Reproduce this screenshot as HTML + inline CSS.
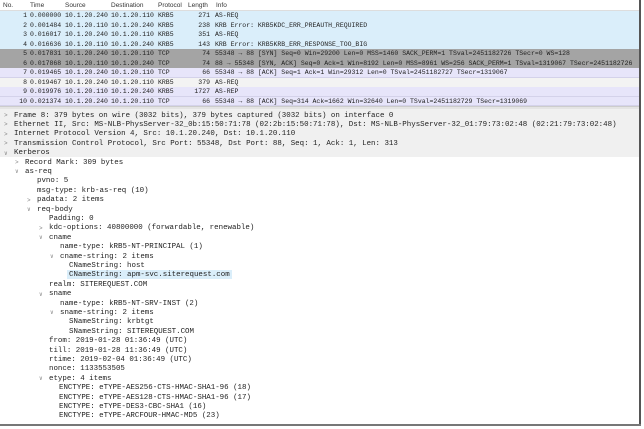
<!DOCTYPE html>
<html><head><meta charset="utf-8"><style>
*{margin:0;padding:0;box-sizing:border-box}
body{width:644px;height:429px;background:#fff;overflow:hidden;position:relative;font-family:"Liberation Mono",monospace;font-size:7.45px;color:#222}
.hdr{position:absolute;left:0;top:0;width:640px;height:11px;background:#fff;border-bottom:1px solid #ddd;font-family:"Liberation Sans",sans-serif;font-size:6.5px;color:#333}
.hdr span{position:absolute;top:2px}
.row{position:absolute;left:0;width:640px;height:9.5px;line-height:9.5px;white-space:pre;overflow:hidden;font-size:6.5px}
.row span{position:absolute;top:0}
.b{background:#daeefa}.g{background:#a4a4a4}.l{background:#e7e5fa;border-bottom:1px solid #d4d2ea}.s{background:#f3f3f3}
.line{position:absolute;height:9.4px;line-height:9.4px;white-space:pre}
.arr{position:absolute;font-size:6px;color:#888}
.rb{position:absolute;left:639px;top:0;width:2px;height:425px;background:#555}
.bb{position:absolute;left:0;top:424px;width:641px;height:2px;background:#777}
</style></head><body>
<div class="hdr"><span style="left:3px">No.</span><span style="left:30px">Time</span><span style="left:65px">Source</span><span style="left:111px">Destination</span><span style="left:158px">Protocol</span><span style="left:188px">Length</span><span style="left:216px">Info</span></div>
<div id="pl"></div>
<div style="position:absolute;left:0;top:106px;width:640px;height:3px;background:#e4e4e4;border-top:1px solid #ccc"></div>
<div style="position:absolute;left:0;top:109px;width:640px;height:48px;background:#f0f0f0"></div>
<div style="position:absolute;left:67px;top:269.6px;width:165px;height:9.4px;background:#daeefa"></div>
<div id="dt"></div>
<div class="rb"></div><div class="bb"></div>
<script>
var rows=[
["b","1","0.000000","10.1.20.240","10.1.20.110","KRB5","271","AS-REQ"],
["b","2","0.001484","10.1.20.110","10.1.20.240","KRB5","238","KRB Error: KRB5KDC_ERR_PREAUTH_REQUIRED"],
["b","3","0.016017","10.1.20.240","10.1.20.110","KRB5","351","AS-REQ"],
["b","4","0.016636","10.1.20.110","10.1.20.240","KRB5","143","KRB Error: KRB5KRB_ERR_RESPONSE_TOO_BIG"],
["g","5","0.017831","10.1.20.240","10.1.20.110","TCP","74","55348 → 88 [SYN] Seq=0 Win=29200 Len=0 MSS=1460 SACK_PERM=1 TSval=2451182726 TSecr=0 WS=128"],
["g","6","0.017868","10.1.20.110","10.1.20.240","TCP","74","88 → 55348 [SYN, ACK] Seq=0 Ack=1 Win=8192 Len=0 MSS=8961 WS=256 SACK_PERM=1 TSval=1319067 TSecr=2451182726"],
["l","7","0.019465","10.1.20.240","10.1.20.110","TCP","66","55348 → 88 [ACK] Seq=1 Ack=1 Win=29312 Len=0 TSval=2451182727 TSecr=1319067"],
["s","8","0.019467","10.1.20.240","10.1.20.110","KRB5","379","AS-REQ"],
["l","9","0.019976","10.1.20.110","10.1.20.240","KRB5","1727","AS-REP"],
["l","10","0.021374","10.1.20.240","10.1.20.110","TCP","66","55348 → 88 [ACK] Seq=314 Ack=1662 Win=32640 Len=0 TSval=2451182729 TSecr=1319069"]];
var h="";rows.forEach(function(r,i){h+='<div class="row '+r[0]+'" style="top:'+(11+i*9.5)+'px"><span style="right:613px">'+r[1]+'</span><span style="left:30px">'+r[2]+'</span><span style="left:65px">'+r[3]+'</span><span style="left:111px">'+r[4]+'</span><span style="left:158px">'+r[5]+'</span><span style="right:430px">'+r[6]+'</span><span style="left:215px">'+r[7]+'</span></div>';});
document.getElementById("pl").innerHTML=h;
var d=[
[14,">","Frame 8: 379 bytes on wire (3032 bits), 379 bytes captured (3032 bits) on interface 0"],
[14,">","Ethernet II, Src: MS-NLB-PhysServer-32_0b:15:50:71:78 (02:2b:15:50:71:78), Dst: MS-NLB-PhysServer-32_01:79:73:02:48 (02:21:79:73:02:48)"],
[14,">","Internet Protocol Version 4, Src: 10.1.20.240, Dst: 10.1.20.110"],
[14,">","Transmission Control Protocol, Src Port: 55348, Dst Port: 88, Seq: 1, Ack: 1, Len: 313"],
[14,"v","Kerberos"],
[25,">","Record Mark: 309 bytes"],
[25,"v","as-req"],
[37,"","pvno: 5"],
[37,"","msg-type: krb-as-req (10)"],
[37,">","padata: 2 items"],
[37,"v","req-body"],
[49,"","Padding: 0"],
[49,">","kdc-options: 40800000 (forwardable, renewable)"],
[49,"v","cname"],
[60,"","name-type: kRB5-NT-PRINCIPAL (1)"],
[60,"v","cname-string: 2 items"],
[69,"","CNameString: host"],
[69,"","CNameString: apm-svc.siterequest.com"],
[49,"","realm: SITEREQUEST.COM"],
[49,"v","sname"],
[60,"","name-type: kRB5-NT-SRV-INST (2)"],
[60,"v","sname-string: 2 items"],
[69,"","SNameString: krbtgt"],
[69,"","SNameString: SITEREQUEST.COM"],
[49,"","from: 2019-01-28 01:36:49 (UTC)"],
[49,"","till: 2019-01-28 11:36:49 (UTC)"],
[49,"","rtime: 2019-02-04 01:36:49 (UTC)"],
[49,"","nonce: 1133553505"],
[49,"v","etype: 4 items"],
[59,"","ENCTYPE: eTYPE-AES256-CTS-HMAC-SHA1-96 (18)"],
[59,"","ENCTYPE: eTYPE-AES128-CTS-HMAC-SHA1-96 (17)"],
[59,"","ENCTYPE: eTYPE-DES3-CBC-SHA1 (16)"],
[59,"","ENCTYPE: eTYPE-ARCFOUR-HMAC-MD5 (23)"]];
h="";d.forEach(function(r,i){var t=111.5+i*9.4;h+='<div class="line" style="left:'+r[0]+'px;top:'+t+'px">'+r[2]+'</div>';if(r[1])h+='<div class="arr" style="left:'+(r[0]-10)+'px;top:'+(t+0.5)+'px">'+(r[1]==">"?"&gt;":"&#8744;")+'</div>';});
document.getElementById("dt").innerHTML=h;
</script>
</body></html>
